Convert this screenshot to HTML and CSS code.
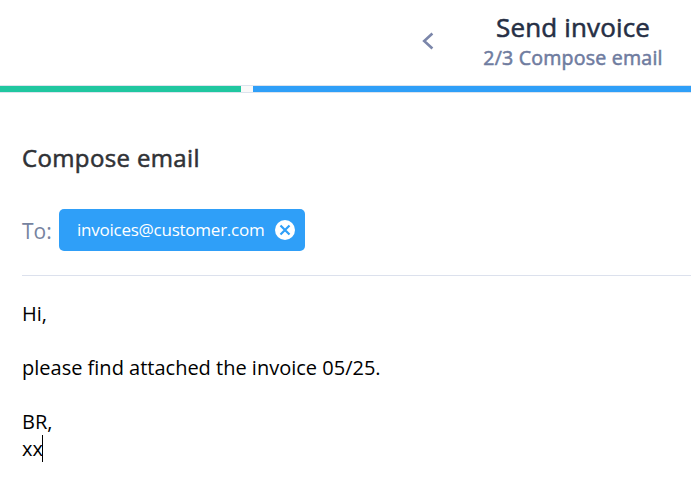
FILE: index.html
```html
<!DOCTYPE html>
<html lang="en">
<head>
<meta charset="utf-8">
<title>Send invoice</title>
<link rel="stylesheet" href="styles.css">
</head>
<body>
<header class="header">
  <button class="back" aria-label="Back"><svg width="12" height="18" viewBox="0 0 12 18"><path d="M10.4 1.5 2.2 9l8.2 7.5"/></svg></button>
  <div class="heading"><h1>Send invoice</h1><p>2/3 Compose email</p></div>
</header>
<div class="progress"><span class="done"></span><span class="gap"></span><span class="current"></span></div>
<main class="compose">
  <h2>Compose email</h2>
  <div class="recipients">
    <span class="label">To:</span>
    <span class="chip"><span class="address">invoices@customer.com</span><svg width="20" height="20" viewBox="0 0 20 20"><circle cx="10" cy="10" r="10"/><path d="m5.5 5.5 9 9m0-9-9 9"/></svg></span>
  </div>
  <div class="message"><p>Hi,</p><p><br></p><p>please find attached the invoice 05/25.</p><p><br></p><p>BR,</p><p class="last">xx<span class="caret"></span></p></div>
</main>
</body>
</html>
```
FILE: styles.css
```css
* { box-sizing: border-box; }
body { margin: 0; background: #fff; font-family: "Open Sans", sans-serif; overflow: hidden; }
h1, h2, p { margin: 0; }
.header { height: 85px; display: flex; padding-left: 422px; }
.back { border: 0; background: none; padding: 0; width: 12px; height: 18px; margin-top: 32px; }
.back svg { display: block; fill: none; stroke: #7b86aa; stroke-width: 2.6; }
.heading { width: 180px; margin-left: 49px; padding-top: 9px; text-align: center; white-space: nowrap; }
h1, h2, .heading p { -webkit-text-stroke: .55px currentColor; }
h1 { font-size: 26px; line-height: 36px; font-weight: 400; letter-spacing: .15px; color: #262f45; }
.heading p { font-size: 19.6px; line-height: 26px; letter-spacing: .2px; color: #6f7c9f; }
.progress { height: 8px; display: flex; border: solid #dce3ed; border-width: 1px 0; }
.done { width: 241px; background: #20c7a0; }
.gap { width: 12px; background: #f9f9f9; }
.current { flex: 1; background: #2f9ff8; }
.compose { padding: 49px 0 0 22px; }
h2 { font-size: 24px; line-height: 32px; font-weight: 400; letter-spacing: .36px; color: #303236; }
.recipients { height: 102px; padding-top: 35px; display: flex; border-bottom: 1px solid #dce1ed; }
.label { width: 37px; font-size: 21px; line-height: 44px; color: #76839f; }
.chip { width: 246px; height: 42px; border-radius: 5px; background: #2f9ff8; color: #fff; display: flex; align-items: center; padding: 0 10px 0 18px; justify-content: space-between; }
.address { font-size: 17px; letter-spacing: -.24px; white-space: nowrap; position: relative; top: -1px; }
.chip svg { fill: #fff; stroke: none; }
.chip path { stroke: #2f9ff8; stroke-width: 2.2; }
.message { padding-top: 24px; font-size: 20px; line-height: 27px; color: #000; }
.last { display: flex; align-items: center; }
.caret { width: 1px; height: 27px; margin-left: -1px; background: #000; }
```
